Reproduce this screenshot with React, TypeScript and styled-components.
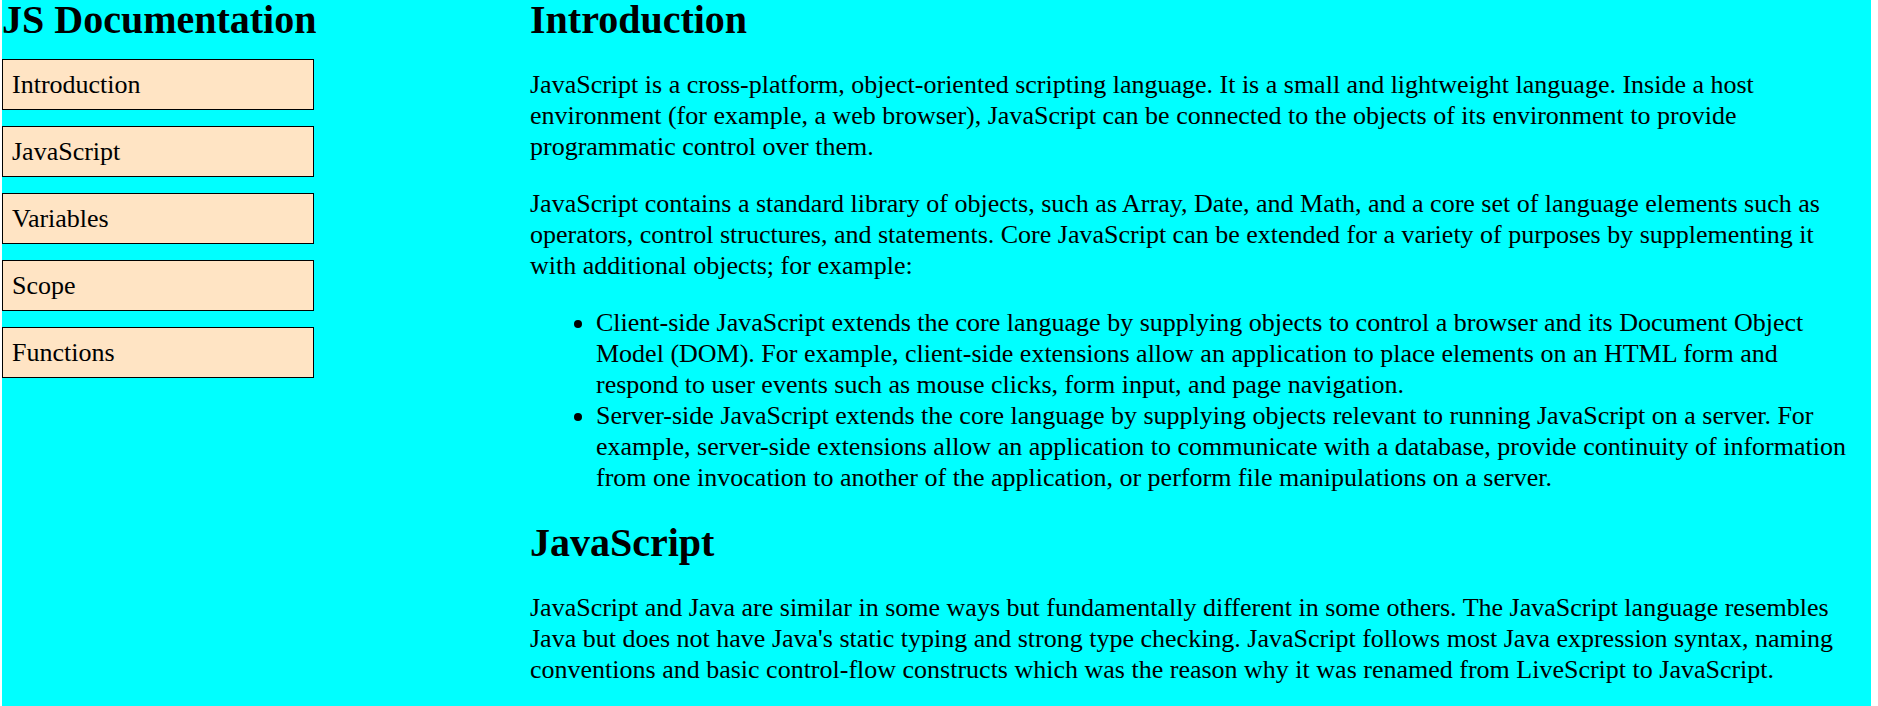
import React from "react";
import styled, { createGlobalStyle } from "styled-components";

const GlobalStyle = createGlobalStyle`
  body {
    margin: 0;
    background: #fff;
    color: #000;
    font-family: "Liberation Serif", "Times New Roman", serif;
    font-size: 26px;
    line-height: 31px;
  }
`;

const Page = styled.div`
  display: grid;
  grid-template-columns: 528px minmax(0, 1fr);
  min-height: 100vh;
  margin: 0 7px 0 2px;
  background: #00ffff;
`;

const Sidebar = styled.nav`
  justify-self: start;
`;

const Content = styled.main`
  padding-right: 16px;
`;

const Heading = styled.h1`
  margin: 0;
  font-size: 40px;
  line-height: 40px;
  font-weight: bold;
`;

const NavList = styled.ul`
  display: grid;
  gap: 16px;
  width: 312px;
  margin: 19px 0 0;
  padding: 0;
  list-style: none;
`;

const NavLink = styled.a`
  display: block;
  box-sizing: border-box;
  padding: 9px;
  border: 1px solid #000;
  background: #ffe4c4;
  color: #000;
  text-decoration: none;
`;

const Section = styled.section`
  & + & {
    margin-top: 30px;
  }
`;

const SectionBody = styled.div`
  display: grid;
  gap: 26px;
  margin-top: 29px;
`;

const Paragraph = styled.p`
  margin: 0;
`;

const BulletList = styled.ul`
  margin: 0;
  padding-left: 66px;
`;

const topics = ["Introduction", "JavaScript", "Variables", "Scope", "Functions"];

export default function App() {
  return (
    <>
      <GlobalStyle />
      <Page>
        <Sidebar>
          <Heading>JS Documentation</Heading>
          <NavList>
            {topics.map((topic) => (
              <li key={topic}>
                <NavLink href={`#${topic}`}>{topic}</NavLink>
              </li>
            ))}
          </NavList>
        </Sidebar>
        <Content>
          <Section id="Introduction">
            <Heading>Introduction</Heading>
            <SectionBody>
              <Paragraph>
                JavaScript is a cross-platform, object-oriented scripting language. It is a small and
                lightweight language. Inside a host environment (for example, a web browser),
                JavaScript can be connected to the objects of its environment to provide programmatic
                control over them.
              </Paragraph>
              <Paragraph>
                JavaScript contains a standard library of objects, such as Array, Date, and Math, and a
                core set of language elements such as operators, control structures, and statements.
                Core JavaScript can be extended for a variety of purposes by supplementing it with
                additional objects; for example:
              </Paragraph>
              <BulletList>
                <li>
                  Client-side JavaScript extends the core language by supplying objects to control a
                  browser and its Document Object Model (DOM). For example, client-side extensions
                  allow an application to place elements on an HTML form and respond to user events
                  such as mouse clicks, form input, and page navigation.
                </li>
                <li>
                  Server-side JavaScript extends the core language by supplying objects relevant to
                  running JavaScript on a server. For example, server-side extensions allow an
                  application to communicate with a database, provide continuity of information from
                  one invocation to another of the application, or perform file manipulations on a
                  server.
                </li>
              </BulletList>
            </SectionBody>
          </Section>
          <Section id="JavaScript">
            <Heading>JavaScript</Heading>
            <SectionBody>
              <Paragraph>
                JavaScript and Java are similar in some ways but fundamentally different in some
                others. The JavaScript language resembles Java but does not have Java's static typing
                and strong type checking. JavaScript follows most Java expression syntax, naming
                conventions and basic control-flow constructs which was the reason why it was renamed
                from LiveScript to JavaScript.
              </Paragraph>
            </SectionBody>
          </Section>
        </Content>
      </Page>
    </>
  );
}
